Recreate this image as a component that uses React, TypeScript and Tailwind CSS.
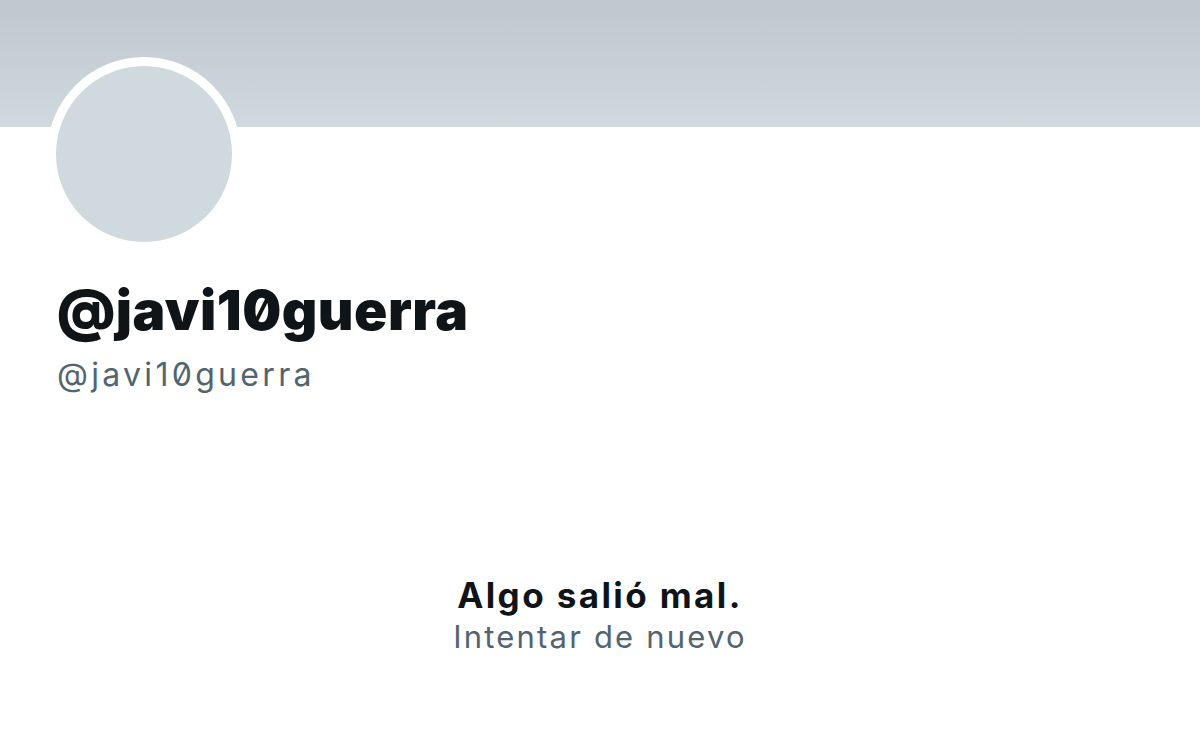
export default function App() {
  return (
    <div className="min-h-[739px] w-[1200px] bg-white font-['Inter',sans-serif] slashed-zero">
      <div className="h-[127px] bg-gradient-to-b from-[#c0c7ce] to-[#cfd9de]" />
      <div className="px-[47px]">
        <div className="-mt-[70px] h-[194px] w-[194px] rounded-full border-[9px] border-white bg-[#cfd9de]" />
        <div className="mt-[27px] pl-[10px]">
          <div className="text-[55px] font-black leading-[64px] tracking-[0.5px] text-[#0f1419]">
            @javi10guerra
          </div>
          <div className="mt-[13px] text-[32px] leading-[40px] tracking-[3.3px] text-[#536471]">@javi10guerra</div>
        </div>
      </div>
      <div className="mt-[178px] flex flex-col items-center">
        <div className="text-[35px] font-bold leading-[44px] tracking-[2.4px] text-[#0f1419]">Algo salió mal.</div>
        <div className="text-[31px] leading-[40px] tracking-[2.2px] text-[#536471]">Intentar de nuevo</div>
      </div>
    </div>
  );
}
